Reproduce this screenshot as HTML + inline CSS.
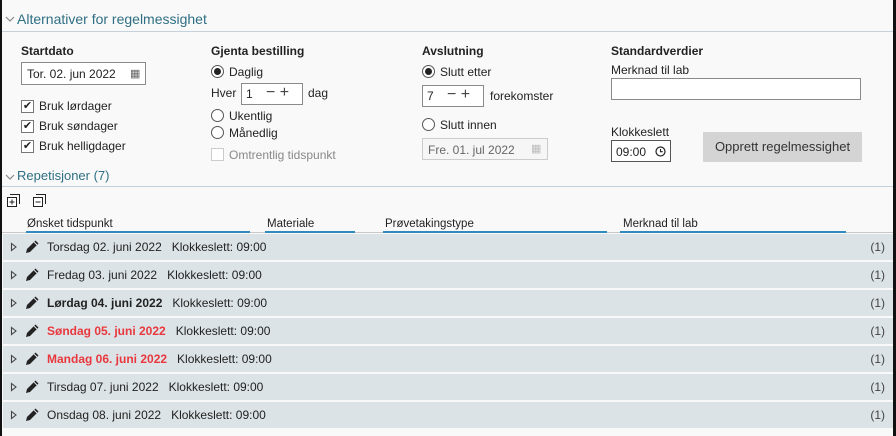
<!DOCTYPE html>
<html><head><meta charset="utf-8"><style>
*{box-sizing:border-box;margin:0;padding:0}
body{width:896px;height:436px;background:#f9f9f9;font-family:"Liberation Sans",sans-serif;font-size:12px;color:#222;position:relative;overflow:hidden}
.a{position:absolute;white-space:nowrap}
.b{font-weight:bold}
.h{color:#2f6f84;font-size:14px}
.inp{position:absolute;border:1px solid #8a8a8a;background:#fff}
.cb{position:absolute;width:13px;height:13px;border:1px solid #777;background:#fff;font-size:11px;line-height:11px;text-align:center}
.rd{position:absolute;width:13px;height:13px;border:1px solid #555;border-radius:50%;background:#fff}
.rd.on::after{content:"";position:absolute;left:2px;top:2px;width:7px;height:7px;border-radius:50%;background:#222}
.row{position:absolute;left:3px;width:890px;height:26px;background:#dce3e7}
.row .t{position:absolute;top:6px;font-size:12px}
.row .n{position:absolute;right:8px;top:6px;color:#444}
.row svg{position:absolute}
.line{position:absolute;height:2px;background:#2f8bbf;top:231px}
</style></head><body>
<div class="a" style="left:0;top:0;width:2px;height:436px;background:#111"></div>
<div class="a" style="left:893px;top:0;width:3px;height:436px;background:#111"></div>
<svg class="a" style="left:5px;top:16px" width="10" height="6"><path d="M1 1l4 4 4-4" fill="none" stroke="#888" stroke-width="1.2"/></svg>
<div class="a h" style="left:17px;top:11px">Alternativer for regelmessighet</div>
<div class="a" style="left:2px;top:31px;width:891px;height:1px;background:#c5d2dc"></div>

<div class="a b" style="left:21px;top:44px">Startdato</div>
<div class="inp" style="left:21px;top:62px;width:125px;height:23px"><span class="a" style="left:5px;top:4px">Tor. 02. jun 2022</span><span class="a" style="left:108px;top:4px;color:#666;font-size:11px">▦</span></div>
<div class="cb" style="left:21px;top:100px">✔</div><div class="a" style="left:39px;top:99px">Bruk lørdager</div>
<div class="cb" style="left:21px;top:120px">✔</div><div class="a" style="left:39px;top:119px">Bruk søndager</div>
<div class="cb" style="left:21px;top:140px">✔</div><div class="a" style="left:39px;top:139px">Bruk helligdager</div>

<div class="a b" style="left:211px;top:44px">Gjenta bestilling</div>
<div class="rd on" style="left:211px;top:65px"></div><div class="a" style="left:229px;top:65px">Daglig</div>
<div class="a" style="left:211px;top:86px">Hver</div>
<div class="inp" style="left:241px;top:83px;width:62px;height:22px"><span class="a" style="left:4px;top:3px">1</span><span class="a" style="left:24px;top:0px;font-size:16px;color:#444">− +</span></div>
<div class="a" style="left:308px;top:86px">dag</div>
<div class="rd" style="left:211px;top:109px"></div><div class="a" style="left:229px;top:109px">Ukentlig</div>
<div class="rd" style="left:211px;top:126px"></div><div class="a" style="left:229px;top:126px">Månedlig</div>
<div class="cb" style="left:211px;top:148px;border-color:#ccc"></div><div class="a" style="left:229px;top:148px;color:#888">Omtrentlig tidspunkt</div>

<div class="a b" style="left:422px;top:44px">Avslutning</div>
<div class="rd on" style="left:422px;top:65px"></div><div class="a" style="left:440px;top:65px">Slutt etter</div>
<div class="inp" style="left:422px;top:85px;width:62px;height:22px"><span class="a" style="left:4px;top:3px">7</span><span class="a" style="left:24px;top:0px;font-size:16px;color:#444">− +</span></div>
<div class="a" style="left:490px;top:89px">forekomster</div>
<div class="rd" style="left:422px;top:118px"></div><div class="a" style="left:440px;top:118px">Slutt innen</div>
<div class="inp" style="left:422px;top:138px;width:126px;height:22px;border-color:#ccc;background:#f6f6f6"><span class="a" style="left:5px;top:4px;color:#666">Fre. 01. jul 2022</span><span class="a" style="left:108px;top:3px;color:#bbb;font-size:11px">▦</span></div>

<div class="a b" style="left:611px;top:44px">Standardverdier</div>
<div class="a" style="left:611px;top:63px">Merknad til lab</div>
<div class="inp" style="left:611px;top:78px;width:250px;height:22px"></div>
<div class="a" style="left:611px;top:125px">Klokkeslett</div>
<div class="inp" style="left:611px;top:140px;width:60px;height:22px;border-color:#555"><span class="a" style="left:4px;top:4px">09:00</span><svg class="a" style="left:43px;top:5px" width="11" height="11"><circle cx="5.5" cy="5.5" r="4.5" fill="none" stroke="#222" stroke-width="1.2"/><path d="M5.5 3v2.7h2.3" fill="none" stroke="#222" stroke-width="1.1"/></svg></div>
<div class="a" style="left:703px;top:132px;width:159px;height:30px;background:#d4d4d4;color:#333;font-size:13px;text-align:center;line-height:30px">Opprett regelmessighet</div>

<svg class="a" style="left:5px;top:174px" width="10" height="6"><path d="M1 1l4 4 4-4" fill="none" stroke="#888" stroke-width="1.2"/></svg>
<div class="a h" style="left:17px;top:168px;font-size:13px">Repetisjoner (7)</div>
<div class="a" style="left:2px;top:186px;width:891px;height:1px;background:#c5d2dc"></div>
<svg class="a" style="left:6px;top:193px" width="15" height="15"><path d="M4 1.5h9.5v9.5" fill="none" stroke="#222"/><rect x="1.5" y="4.5" width="9" height="9" fill="#fff" stroke="#222"/><path d="M3.5 9h5M6 6.5v5" stroke="#222"/></svg>
<svg class="a" style="left:32px;top:193px" width="15" height="15"><path d="M4 1.5h9.5v9.5" fill="none" stroke="#222"/><rect x="1.5" y="4.5" width="9" height="9" fill="#fff" stroke="#222"/><path d="M3.5 9h5" stroke="#222"/></svg>

<div class="a" style="left:27px;top:218px;font-size:11.5px">Ønsket tidspunkt</div>
<div class="a" style="left:267px;top:218px;font-size:11.5px">Materiale</div>
<div class="a" style="left:385px;top:218px;font-size:11.5px">Prøvetakingstype</div>
<div class="a" style="left:623px;top:218px;font-size:11.5px">Merknad til lab</div>
<div class="a" style="left:2px;top:232px;width:891px;height:1px;background:#c8c8c8"></div>
<div class="line" style="left:26px;width:224px"></div>
<div class="line" style="left:265px;width:90px"></div>
<div class="line" style="left:383px;width:224px"></div>
<div class="line" style="left:620px;width:226px"></div>

<svg width="0" height="0" style="position:absolute"><defs>
<symbol id="tri" viewBox="0 0 8 10"><path d="M1.5 1.5l4.5 3.5-4.5 3.5z" fill="none" stroke="#444" stroke-width="1.1"/></symbol>
<symbol id="pen" viewBox="0 0 16 16"><path d="M11.5 1.5l3 3-8.5 8.5-4 1 1-4z" fill="#222"/><path d="M10 3l3 3" stroke="#dce3e7" stroke-width="1"/></symbol>
</defs></svg>

<div class="row" style="top:234px"><svg style="left:7px;top:8px" width="8" height="10"><use href="#tri"/></svg><svg style="left:21px;top:5px" width="16" height="16"><use href="#pen"/></svg><span class="t" style="left:44px">Torsdag 02. juni 2022 &nbsp; Klokkeslett: 09:00</span><span class="n">(1)</span></div>
<div class="row" style="top:262px"><svg style="left:7px;top:8px" width="8" height="10"><use href="#tri"/></svg><svg style="left:21px;top:5px" width="16" height="16"><use href="#pen"/></svg><span class="t" style="left:44px">Fredag 03. juni 2022 &nbsp; Klokkeslett: 09:00</span><span class="n">(1)</span></div>
<div class="row" style="top:290px"><svg style="left:7px;top:8px" width="8" height="10"><use href="#tri"/></svg><svg style="left:21px;top:5px" width="16" height="16"><use href="#pen"/></svg><span class="t" style="left:44px"><b>Lørdag 04. juni 2022</b> &nbsp; Klokkeslett: 09:00</span><span class="n">(1)</span></div>
<div class="row" style="top:318px"><svg style="left:7px;top:8px" width="8" height="10"><use href="#tri"/></svg><svg style="left:21px;top:5px" width="16" height="16"><use href="#pen"/></svg><span class="t" style="left:44px"><b style="color:#e8383d">Søndag 05. juni 2022</b> &nbsp; Klokkeslett: 09:00</span><span class="n">(1)</span></div>
<div class="row" style="top:346px"><svg style="left:7px;top:8px" width="8" height="10"><use href="#tri"/></svg><svg style="left:21px;top:5px" width="16" height="16"><use href="#pen"/></svg><span class="t" style="left:44px"><b style="color:#e8383d">Mandag 06. juni 2022</b> &nbsp; Klokkeslett: 09:00</span><span class="n">(1)</span></div>
<div class="row" style="top:374px"><svg style="left:7px;top:8px" width="8" height="10"><use href="#tri"/></svg><svg style="left:21px;top:5px" width="16" height="16"><use href="#pen"/></svg><span class="t" style="left:44px">Tirsdag 07. juni 2022 &nbsp; Klokkeslett: 09:00</span><span class="n">(1)</span></div>
<div class="row" style="top:402px"><svg style="left:7px;top:8px" width="8" height="10"><use href="#tri"/></svg><svg style="left:21px;top:5px" width="16" height="16"><use href="#pen"/></svg><span class="t" style="left:44px">Onsdag 08. juni 2022 &nbsp; Klokkeslett: 09:00</span><span class="n">(1)</span></div>
</body></html>
